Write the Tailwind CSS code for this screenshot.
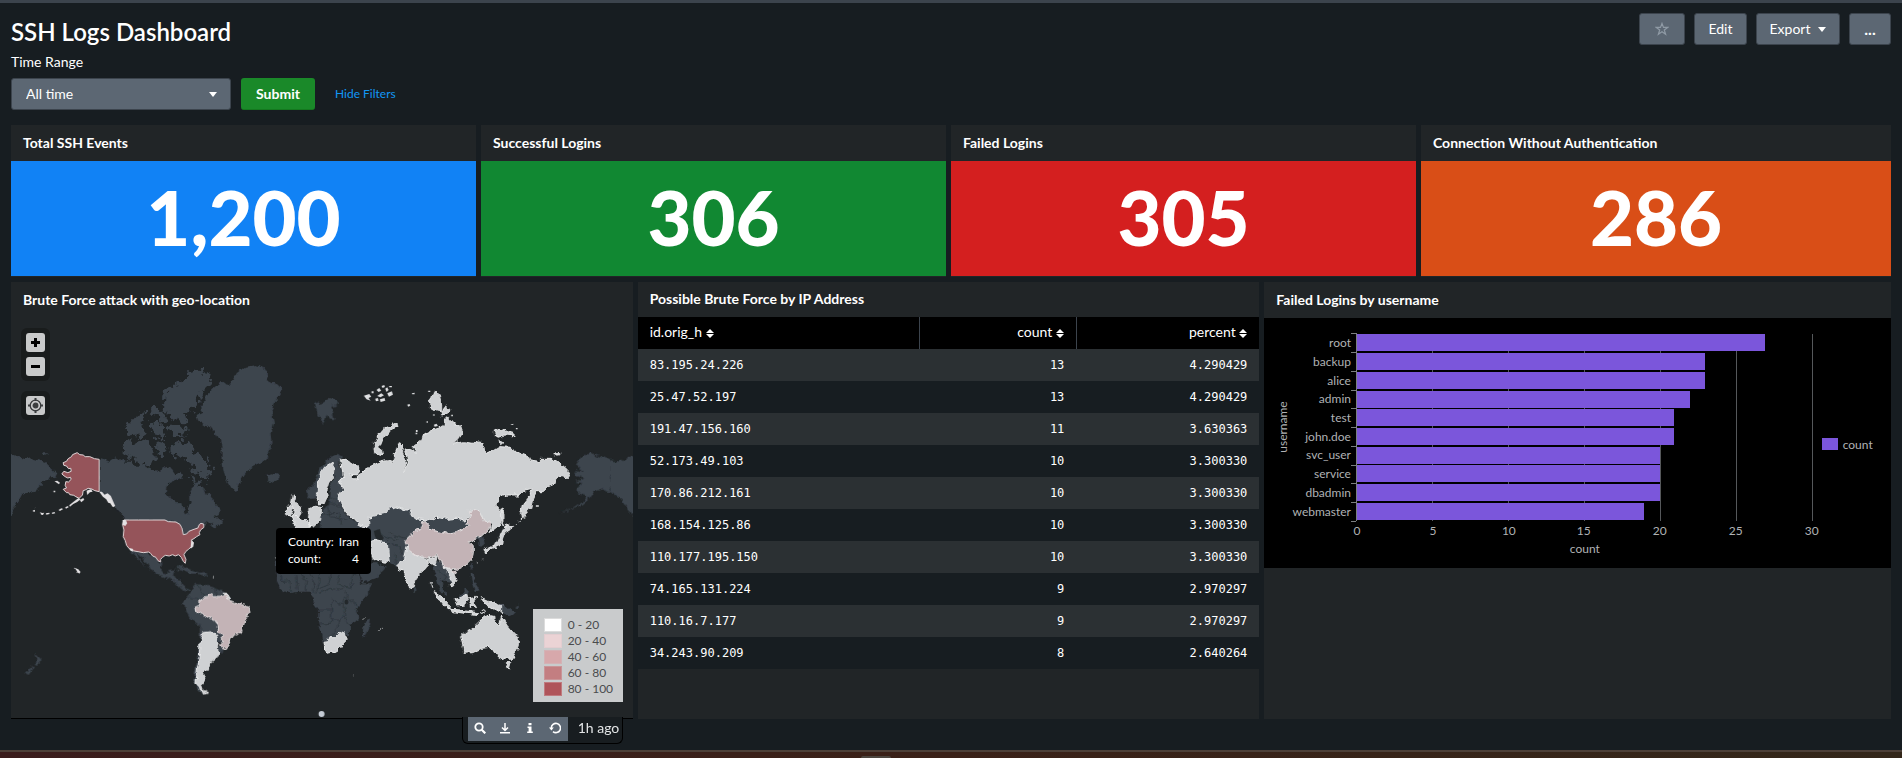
<!DOCTYPE html>
<html lang="en">
<head>
<meta charset="utf-8">
<title>SSH Logs Dashboard</title>
<meta name="viewport" content="width=device-width, initial-scale=1">
<script src="https://cdn.jsdelivr.net/npm/@tailwindcss/browser@4"></script>
</head>
<body class="bg-[#171d21] text-white text-sm font-['Lato',sans-serif]">
<div class="flex min-h-screen flex-col">
  <div class="h-[3px] bg-[#3c444d]"></div>

  <header class="flex items-start justify-between px-[11px] pt-[10px]">
    <div>
      <h1 class="pt-[7px] text-2xl leading-6 font-semibold">SSH Logs Dashboard</h1>
      <label for="range" class="mt-2 block leading-5">Time Range</label>
      <div class="mt-[6px] flex items-center">
        <div class="relative">
          <select id="range" class="h-8 w-[220px] appearance-none rounded-[3px] border border-[#3c444d] bg-[#5c6773] pl-[14px] text-sm text-white">
            <option>All time</option>
          </select>
          <svg class="pointer-events-none absolute top-[14px] right-[14px] h-[5px] w-2" viewBox="0 0 8 5" fill="#fff"><path d="M0 0h8L4 5z"/></svg>
        </div>
        <button class="ml-[10px] h-8 w-[74px] rounded-[3px] border-b border-[#14791f] bg-[#1a8929] font-bold">Submit</button>
        <a href="#" class="ml-5 pb-px text-xs text-[#1297f5]">Hide Filters</a>
      </div>
    </div>
    <div class="flex gap-[9px]">
      <button aria-label="Favorite" class="flex h-8 w-[46px] items-center justify-center rounded-[3px] border border-[#3c444d] bg-[#5c6773]">
        <svg class="h-[14px] w-[14px]" viewBox="0 0 14 14" fill="none" stroke="#8f9aa5" stroke-width="1.2"><path d="M7 1.4l1.5 4h4.2L9.3 8l1.3 4.2L7 9.7l-3.6 2.5L4.700 8 1.300 5.400h4.200z"/></svg>
      </button>
      <button class="h-8 w-[53px] rounded-[3px] border border-[#3c444d] bg-[#5c6773]">Edit</button>
      <button class="flex h-8 w-[84px] items-center justify-center gap-2 rounded-[3px] border border-[#3c444d] bg-[#5c6773]">Export
        <svg class="h-[5px] w-2" viewBox="0 0 8 5" fill="#fff"><path d="M0 0h8L4 5z"/></svg>
      </button>
      <button aria-label="More" class="h-8 w-[42px] rounded-[3px] border border-[#3c444d] bg-[#5c6773] text-base font-bold">...</button>
    </div>
  </header>

  <main class="px-[11px]">
    <div class="mt-[15px] grid grid-cols-4">
      <section class="mr-[5px] bg-[#212527] pb-px">
        <h2 class="h-9 px-3 pt-2 leading-5 font-bold">Total SSH Events</h2>
        <p class="flex h-[115px] items-center justify-center bg-[#1182f5] pb-1 text-[76px] leading-none font-black">1,200</p>
      </section>
      <section class="mr-[5px] bg-[#212527] pb-px">
        <h2 class="h-9 px-3 pt-2 leading-5 font-bold">Successful Logins</h2>
        <p class="flex h-[115px] items-center justify-center bg-[#118832] pb-1 text-[76px] leading-none font-black">306</p>
      </section>
      <section class="mr-[5px] bg-[#212527] pb-px">
        <h2 class="h-9 px-3 pt-2 leading-5 font-bold">Failed Logins</h2>
        <p class="flex h-[115px] items-center justify-center bg-[#d41f1f] pb-1 text-[76px] leading-none font-black">305</p>
      </section>
      <section class="bg-[#212527] pb-px">
        <h2 class="h-9 px-3 pt-2 leading-5 font-bold">Connection Without Authentication</h2>
        <p class="flex h-[115px] items-center justify-center bg-[#d94e17] pb-1 text-[76px] leading-none font-black">286</p>
      </section>
    </div>

    <div class="mt-[5px] grid grid-cols-3">
      <section class="relative mr-[5px] flex flex-col border-b border-black bg-[#212527]">
        <h2 class="h-9 px-3 pt-2 leading-5 font-bold">Brute Force attack with geo-location</h2>
        <svg class="h-[400px] w-full" viewBox="11 318 622 400" preserveAspectRatio="xMidYMid slice" role="img" aria-label="World map of attack counts">
          <defs>
            <filter id="coast" x="0" y="0" width="100%" height="100%"><feTurbulence type="fractalNoise" baseFrequency=".16" numOctaves="3" seed="4"/><feDisplacementMap in="SourceGraphic" scale="6" xChannelSelector="R" yChannelSelector="G"/></filter>
            <filter id="arctic" x="-5%" y="-5%" width="110%" height="110%"><feTurbulence type="fractalNoise" baseFrequency=".16" numOctaves="3" seed="9"/><feDisplacementMap in="SourceGraphic" scale="15" xChannelSelector="R" yChannelSelector="G"/></filter>
          </defs>
          <!-- countries without data -->
          <g fill="#3c444d" filter="url(#arctic)">
            <g transform="translate(0 280) scale(.33333)">
              <path d="M515 495L535 485 555 485 575 500 590 515 610 530 625 555 637 575 630 590 622 582 625 600 610 600 595 580 580 575 585 560 565 545 550 535 530 530 515 515ZM570 592L600 600 615 610 600 617 580 605ZM375 475L395 485 420 480 450 490 460 510 462 540 455 555 435 560 415 548 395 535 385 520 372 512 365 505ZM580 278L600 272 625 278 638 295 630 310 610 330 600 350 590 375 575 395 560 405 565 425 545 430 520 420 500 400 490 375 490 350 505 330 525 315 545 300 560 285ZM375 445L390 425 410 405 430 398 435 415 425 430 435 450 445 462 430 472 405 468ZM450 430L475 425 500 445 495 470 470 475 455 455ZM505 440L560 440 560 470 520 472ZM450 385L465 380 490 395 500 420 480 425ZM470 490L490 485 500 510 495 535 475 525Z"/>
            </g>
          </g>
          <g fill="#3c444d" filter="url(#coast)">
            <g transform="translate(0 280) scale(.33333)">
              <path d="M25 520L45 525 70 540 100 535 135 545 155 565 172 580 165 595 150 590 145 600 125 605 120 625 90 638 70 640 62 655 50 675 40 700 25 715ZM128 520l10-4 6 4-8 4Z"/>
              <path d="M299 538L330 545 350 532 375 545 395 545 410 560 440 560 460 570 480 572 500 560 515 565 525 580 545 575 550 590 530 600 515 605 500 620 498 640 510 655 530 665 545 672 550 690 555 703 565 700 562 680 572 665 570 640 575 625 590 612 610 625 618 645 630 640 640 660 655 680 662 690 660 705 645 712 672 722 670 732 650 735 640 745 630 738 640 725 622 728 610 740 590 748 565 760 550 765 545 745 520 725 375 718 360 700 345 680 330 648 299 635Z"/>
              <path d="M700 300L710 280 735 260 765 255 790 262 805 285 800 300 830 315 850 325 840 345 825 365 815 390 822 430 815 460 818 490 805 515 805 535 785 550 760 560 740 575 725 595 718 620 710 637 695 625 680 600 670 570 668 540 668 510 660 480 645 455 620 440 595 425 590 405 610 395 600 380 615 360 625 340 645 320 670 305 685 318ZM798 585L815 580 840 585 838 598 820 607 802 600Z"/>
            </g>
            <g transform="translate(300 280) scale(.33333)">
              <path d="M45 370L75 362 90 353 117 365 110 378 95 380 100 400 105 418 90 415 82 405 70 435 62 415 52 400ZM20 640L40 610 60 565 90 530 115 522 130 530 118 548 128 590 130 620 118 640 120 665 140 700 160 725 210 745 210 700 260 692 290 675 345 680 345 760 60 760 62 700 82 680 92 640 90 615 102 590 104 560 82 560 66 590 60 650 22 655Z"/>
              <path d="M828 555L845 530 868 520 895 528 935 540 960 548 990 530 1010 525 1010 725 985 690 970 665 940 640 905 628 885 635 870 655 840 680 800 695 780 700 820 685 850 665 862 650 835 640 830 625 848 610 830 605 850 595 825 585 830 570 850 575Z"/>
            </g>
            <g transform="translate(0 510) scale(.33333)">
              <path d="M392 122L447 128 455 138 470 145 480 155 488 160 482 178 490 188 505 190 510 180 525 178 520 195 530 210 545 212 548 228 558 235 572 238 560 242 545 238 525 215 500 205 470 192 452 180 440 160 425 140 412 128 418 145 435 170 425 160 405 135ZM525 176L545 168 575 180 605 190 570 191 545 178ZM590 190l22 -4 12 6-14 6Z"/>
              <path d="M575 235L590 222 620 225 650 235 672 245 690 262 690 290 655 345 655 370 665 378 672 395 658 400 650 380 630 365 610 370 600 400 600 440 594 480 594 515 603 535 608 553 590 535 582 510 588 470 595 420 600 380 600 350 575 330 560 305 552 280 560 260 570 250ZM655 410L672 416 668 430 655 430Z"/>
              <path d="M103 430L122 448 117 465 108 462 110 450ZM105 465L97 480 87 495 77 490 90 475Z"/>
            </g>
            <g transform="translate(300 510) scale(.33333)">
              <path d="M-72 150L-72 210 -60 235 -35 250 0 245 30 245 42 262 40 280 55 300 55 340 65 370 72 397 110 400 140 375 150 375 150 345 175 330 172 290 200 260 220 220 185 220 175 192 170 150ZM178 180L213 160 235 160 257 170 250 185 225 205 190 218 182 205ZM190 350L200 330 213 325 210 350 198 380 188 378Z"/>
              <path d="M190 0L335 0 345 28 500 22 508 48 470 75 400 80 330 120 292 168 268 162 213 110 205 60ZM530 80L547 78 552 105 540 110 538 95ZM340 230l7 4-2 12-6-2ZM512 190L522 190 525 215 540 240 525 247 515 215ZM512 168l6-6 2 12-5 2Z"/>
              <path d="M395 160L425 150 460 190 456 218 440 217 425 210 430 235 440 255 435 258 420 240 410 205ZM475 262L500 235 510 245 500 258ZM603 282L630 293 645 305 625 316 603 308ZM645 292l16-6-4 8Z"/>
            </g>
          </g>
          <!-- inland borders -->
          <g fill="none" stroke="#293036" stroke-width="1.8" filter="url(#coast)">
            <g transform="translate(300 510) scale(.33333)">
              <path d="M-55 192V215L-30 212-28 245M-10 195L-5 240M5 192L20 215 15 245M30 192L45 220 40 245M62 192L60 215 48 250M95 192L85 225 60 235M120 192L115 225 150 235 160 222M60 250L90 235 115 240 130 235M55 300L95 300 95 340 55 342M95 300L100 270 130 285 135 260M130 285L135 315 120 330 95 330M135 260L165 285M135 245L145 262 172 285M165 192L150 225M120 330L115 350 90 380M130 320L150 345M60 12L120 10 125 45M85 -30L90 20 140 30M230 60L260 85 300 90M265 70L320 85M265 100L300 105 310 140M290 165L285 130M415 180L440 200 430 215"/>
            </g>
            <g transform="translate(0 510) scale(.33333)"><path d="M595 222L600 245 620 262M560 260L580 268 600 265M600 345L610 370M648 235L650 260"/></g>
            <g transform="translate(300 280) scale(.33333)"><path d="M935 540V640M90 650L120 660M88 670L125 680"/></g>
          </g>
          <ellipse cx="346.500" cy="602" rx="2" ry="2.500" fill="#23282b"/>
          <path d="M374 531l6-2 1 5 3 4-3 4-4-2-2-4z" fill="#23282b"/>
          <!-- 0 - 20 -->
          <g fill="#cfd1d3" stroke="#e9eaeb" stroke-width="3" filter="url(#coast)">
            <g transform="translate(300 280) scale(.33333)">
              <path d="M122 540L140 538 165 555 178 572 170 585 150 582 165 598 180 580 195 568 210 560 235 548 260 542 278 548 285 520 298 488 310 495 308 520 318 555 308 575 322 560 322 535 315 505 335 510 350 520 340 500 365 480 370 465 400 450 430 440 435 425 445 415 458 430 480 435 487 455 478 475 460 492 490 485 520 490 530 485 550 488 555 520 575 515 600 500 630 502 660 520 685 530 690 540 725 545 725 535 750 535 775 545 795 562 812 580 798 600 790 590 768 592 765 612 745 620 730 635 708 635 700 650 692 680 680 695 665 718 662 700 668 675 688 650 697 625 675 630 660 645 625 645 605 650 585 675 595 690 605 690 605 715 600 735 590 745 573 758 577 735 550 720 540 692 520 690 508 710 495 720 470 715 440 718 410 712 385 720 345 716 330 690 310 690 290 680 270 685 260 700 205 712 207 740 190 740 165 725 155 712 140 695 130 680 118 660 118 640 130 625 120 600 130 590 125 560Z"/>
              <path d="M605 685L612 700 612 728 606 740ZM75 560L95 548 103 560 100 590 85 610 78 630 82 650 72 672 58 675 50 650 55 610 62 580Z"/>
              <path d="M385 365L398 345 405 330 418 345 425 375 425 392 410 390 395 380ZM422 408L432 385 440 378 452 392 440 405ZM245 527L225 520 220 495 232 470 255 445 290 428 294 440 270 450 250 475 240 500ZM580 455L600 445 620 455 640 460 645 468 615 465 598 472 585 468ZM597 480L612 488 605 494ZM762 520L778 516 780 524 765 526Z"/>
              <path d="M28 690L45 678 65 683 62 718 40 738 25 735ZM-20 642l8 2-4 18 14 16 6 20-8 14-18-4 8-16-12-18ZM-44 690l14-16 10 14-8 18-14 2ZM-22 706L5 716 28 730 33 760-12 760Z"/>
            </g>
            <g transform="translate(0 510) scale(.33333)">
              <path d="M608 368L630 365 650 378 656 395 652 412 658 435 640 450 630 458 625 475 610 490 618 505 605 525 610 540 625 550 607 552 603 535 588 520 592 480 598 440 600 400ZM670 250L680 250 690 265 680 276ZM298 635"/>
              <path d="M222 176l8 3M232 182l6 4M636 200h3M823 143h4M102 2h2"/>
            </g>
            <g transform="translate(300 510) scale(.33333)">
              <path d="M72 397L85 395 90 380 110 380 130 365 138 375 138 395 115 422 80 430ZM213 98L235 93 262 100 265 135 268 158 250 155 232 150 205 130Z"/>
              <path d="M318 112L330 108 340 130 380 150 412 138 405 165 395 165 385 155 378 175 360 190 345 210 340 230 330 235 318 205 312 182 298 180 292 165 310 150ZM430 172L455 176 462 190 468 215 455 230 445 228 458 215 450 195 440 180Z"/>
              <path d="M403 245L420 255 440 275 455 295 450 300 430 285 412 262ZM452 298L480 300 510 305 535 308 535 314 500 310 460 305ZM465 265L485 260 500 252 505 265 495 285 475 288ZM508 266L530 262 520 275 530 290 518 285 512 296ZM550 268L565 275 580 275 605 285 605 308 590 300 570 290 555 280ZM540 258l6 12M545 300l10 4M540 312l14-6M395 215l4 22"/>
              <path d="M482 380L500 365 520 355 535 340 548 328 560 318 582 322 582 338 598 348 605 318 615 335 625 350 640 368 655 385 655 410 645 430 635 448 610 447 595 440 590 430 580 430 570 412 545 415 515 428 492 430 488 400ZM617 458L633 458 628 477 620 475ZM612 52L618 42 640 50 615 66 608 85 605 105 575 115 558 132 552 120 575 108 595 95 603 70ZM188 -2"/>
              <path d="M646 44l4-3M658 34l4-4M668 26l4-4M676 14l4-4M190 324h4M236 360h4M244 358h4M159 497v2M530 160l3-2M544 152l3-2"/>
            </g>
          </g>
          <g fill="#dfe0e2" transform="translate(300 280) scale(.33333)"><path d="M192 347l16-5 6 8-8 4 6 8-12-4zM230 330l8-6 6 8-8 4zM232 348l12-8 8 6-10 6zM245 318l8-3 2 6-7 3zM256 326l6-4 4 8-6 6zM268 318h8v4h-8zM262 340l14-6 3 10-12 6zM240 358l14-4 2 8-14 4zM226 356l8-2 2 8-8 2zM215 334h6v6h-6zM336 340l8-2v5h-7zM322 374l7-2 2 5-6 3zM348 450h5v6h-5zM347 458h5v5h-5zM378 426l6-3v6zM385 332h6v4h-6zM632 434l8-3v4h-7zM648 444h5v4h-5zM402 434l8-3 4 7-10 2zM454 404h5v5h-5zM708 676h9v4h-9zM400 403h4v4h-4z"/></g>
          <!-- 20 - 40 -->
          <g fill="#c3b3b6" stroke="#e6e2e3" stroke-width="3" filter="url(#coast)">
            <path transform="translate(300 510) scale(.33333)" d="M320 90L345 65 360 55 368 35 378 32 390 58 440 72 470 68 490 55 508 48 500 40 512 15 508 2 520 -2 540 5 550 32 575 38 570 55 545 78 530 85 515 92 505 95 520 110 520 130 515 150 500 165 475 178 455 175 430 172 425 150 410 135 380 145 345 135 325 118 315 95ZM458 182l8-2 4 6-8 4Z"/>
            <path transform="translate(0 510) scale(.33333)" d="M600 285L600 265 625 262 635 250 645 262 668 262 675 252 690 272 715 280 748 292 750 308 735 330 728 360 710 372 695 380 688 400 675 420 658 408 672 395 665 378 655 370 655 345 640 325 615 318 588 308 585 292Z"/>
          </g>
          <!-- 80 - 100 -->
          <g fill="#95545a" stroke="#e0d6d8" stroke-width="3" stroke-linejoin="round">
            <path transform="translate(0 280) scale(.33333)" d="M232 518L240 524 250 525 256 530 270 530 284 536 298 538 298 635 285 632 276 627 265 625 256 630 250 632 248 645 238 655 228 650 222 646 210 644 206 638 200 638 190 628 200 624 196 616 198 605 206 606 214 598 212 592 204 594 196 590 186 582 192 574 204 578 214 574 213 565 206 566 200 558 192 556 190 548 200 544 205 536 215 530 218 524Z"/>
            <path transform="translate(0 510) scale(.33333)" d="M372 30H495L505 35 528 36 540 43 546 54 550 74 560 72 567 64 582 58 594 54 598 44 603 40 611 42 612 52 602 60 598 68 600 74 590 80 582 86 574 90 580 98 576 108 566 118 558 124 552 134 558 148 556 160 550 154 544 142 536 134 526 138 518 134 508 138 496 136 488 142 482 148 482 156 474 152 468 142 458 138 452 130 446 126 430 128 398 122 388 116 380 106 376 92 370 80 372 60 368 44Z"/>
          </g>
          <g transform="translate(0 280) scale(.33333)" fill="#e4e2e4"><path d="M298 635l8 0 8 9 9-4 10 8 6 14 7 16-7 4-8-12-6-2-6-10-10-8zM236 654l6 4-10 8-12 6-10 8-2-4 12-10zM260 632l14-5 4 8-8 2-8 8zM196 682l8-4 2 4-8 4zM176 690l8-5 6 2-10 6zM156 698l8-2 2 4-9 2zM138 700l10-2 1 4-10 2zM120 697l7 2 6-1-4 7h-4zM100 690h5v5h-5zM164 604l8-2 8 6-3 5zM161 632h5v5h-5zM240 660l10-6 3 5-9 8z"/></g>
          <g transform="translate(0 510) scale(.33333)" fill="#e4e2e4"><path d="M368 30l10 0 4 10-6 8-8-4zM574 90l8 8-2 12-8 6zM388 114l12 3-2 8-8-4zM225 174l10 4 7 8-4 5-6-6z"/></g>
          <circle cx="321.700" cy="714" r="3" fill="#c5ccd5"/>
        </svg>

        <div class="absolute top-[46px] left-[10px] flex flex-col gap-[10px]">
          <div class="flex flex-col gap-[5px] rounded-md bg-[#191c1c] p-[5px]">
            <button aria-label="Zoom in" class="flex h-[19px] w-[19px] items-center justify-center rounded-[3px] bg-[#c8c9c9]"><svg class="h-[9px] w-[9px]" viewBox="0 0 9 9"><path d="M3 0h3v3h3v3H6v3H3V6H0V3h3z"/></svg></button>
            <button aria-label="Zoom out" class="flex h-[19px] w-[19px] items-center justify-center rounded-[3px] bg-[#c8c9c9]"><svg class="h-[9px] w-[9px]" viewBox="0 0 9 9"><path d="M0 3h9v3H0z"/></svg></button>
          </div>
          <div class="rounded-md bg-[#191c1c] p-[5px]">
            <button aria-label="Reset view" class="flex h-[19px] w-[19px] items-center justify-center rounded-[3px] bg-[#c8c9c9]"><svg class="h-[15px] w-[15px]" viewBox="0 0 15 15" fill="none" stroke="#3b3d3e" stroke-width="1.300"><circle cx="7.500" cy="7.500" r="5.300"/><circle cx="7.500" cy="7.500" r="2.300" fill="#3b3d3e"/><path d="M7.500 0v3M7.500 12v3M0 7.500h3M12 7.500h3" stroke-width="2"/></svg></button>
          </div>
        </div>

        <dl class="absolute top-[246px] left-[265px] grid w-[95px] grid-cols-[auto_auto] rounded bg-black px-3 pt-[5px] pb-[7px] text-xs leading-[17px]">
          <dt>Country:</dt><dd class="text-right">Iran</dd>
          <dt>count:</dt><dd class="text-right">4</dd>
        </dl>

        <ul class="absolute right-[10px] bottom-4 w-[90px] bg-[#c9cbcc] pt-2 pb-[5px] pl-[11px] text-xs leading-4 text-[#4a4c4e]">
          <li class="flex items-center gap-[6px]"><span class="h-[14px] w-[18px] border border-[#dcdcdc] bg-white"></span>0 - 20</li>
          <li class="flex items-center gap-[6px]"><span class="h-[14px] w-[18px] border border-[#e3cdd0] bg-[#ebd3d5]"></span>20 - 40</li>
          <li class="flex items-center gap-[6px]"><span class="h-[14px] w-[18px] border border-[#d3b2b5] bg-[#d7a8ab]"></span>40 - 60</li>
          <li class="flex items-center gap-[6px]"><span class="h-[14px] w-[18px] border border-[#c89497] bg-[#c37e81]"></span>60 - 80</li>
          <li class="flex items-center gap-[6px]"><span class="h-[14px] w-[18px] border border-[#bf7a7e] bg-[#af5459]"></span>80 - 100</li>
        </ul>

        <div class="absolute top-[435px] right-[10px] flex h-[27px] w-[161px] items-start rounded-b-md border border-t-0 border-black bg-[#181d20] pl-[5px]">
          <div class="flex h-6 w-[100px] bg-[#5c6773]">
            <button aria-label="Open in search" class="flex flex-1 items-center justify-center pb-0.5"><svg class="h-3 w-3" viewBox="0 0 12 12" fill="none" stroke="#fff" stroke-width="1.800"><circle cx="5" cy="5" r="3.700"/><path d="M7.700 7.700l3.600 3.600" stroke-width="2.200"/></svg></button>
            <button aria-label="Export" class="flex flex-1 items-center justify-center pb-0.5"><svg class="h-3 w-3" viewBox="0 0 12 12" fill="none" stroke="#fff" stroke-width="1.500"><path d="M6 1v7.500M3 5.500l3 3 3-3M1 10.800h10"/></svg></button>
            <button aria-label="Inspect" class="flex flex-1 items-center justify-center pb-0.5"><svg class="h-3 w-3" viewBox="0 0 12 12" fill="#fff"><path d="M4.500 1h3v2.200h-3zM3.500 4.500h4V9.500h1.300V11H3.200V9.500h1.400V6H3.500z"/></svg></button>
            <button aria-label="Refresh" class="flex flex-1 items-center justify-center pb-0.5"><svg class="h-3 w-3" viewBox="0 0 12 12" fill="none" stroke="#fff" stroke-width="1.600"><path d="M2.300 6A4.600 4.600 0 1 1 4 9.600"/><path d="M0 5.500h4.800L2.400 8.500z" fill="#fff" stroke="none"/></svg></button>
          </div>
          <span class="ml-[10px] text-sm leading-[21px] text-[#e3e5e6]">1h ago</span>
        </div>
      </section>

      <section class="mr-[5px] bg-[#212527]">
        <h2 class="h-[35px] px-3 pt-[7px] leading-5 font-bold">Possible Brute Force by IP Address</h2>
        <table class="w-full table-fixed border-collapse">
          <colgroup><col><col class="w-[157px]"><col class="w-[183px]"></colgroup>
          <thead class="bg-black">
            <tr class="h-8">
              <th class="border-r border-[#3c444d] px-3 pb-0.5 text-left font-normal">id.orig_h <svg class="inline h-[9px] w-2 align-[-1px]" viewBox="0 0 8 9" fill="#fff"><path d="M4 0l4 4H0zM0 5h8L4 9z"/></svg></th>
              <th class="border-r border-[#3c444d] px-3 pb-0.5 text-right font-normal">count <svg class="inline h-[9px] w-2 align-[-1px]" viewBox="0 0 8 9" fill="#fff"><path d="M4 0l4 4H0zM0 5h8L4 9z"/></svg></th>
              <th class="px-3 pb-0.5 text-right font-normal">percent <svg class="inline h-[9px] w-2 align-[-1px]" viewBox="0 0 8 9" fill="#fff"><path d="M4 0l4 4H0zM0 5h8L4 9z"/></svg></th>
            </tr>
          </thead>
          <tbody class="font-['DejaVu_Sans_Mono',monospace] text-xs">
            <tr class="h-8 bg-[#2b3033]"><td class="px-3">83.195.24.226</td><td class="px-3 text-right">13</td><td class="px-3 text-right">4.290429</td></tr>
            <tr class="h-8 bg-[#171d21]"><td class="px-3">25.47.52.197</td><td class="px-3 text-right">13</td><td class="px-3 text-right">4.290429</td></tr>
            <tr class="h-8 bg-[#2b3033]"><td class="px-3">191.47.156.160</td><td class="px-3 text-right">11</td><td class="px-3 text-right">3.630363</td></tr>
            <tr class="h-8 bg-[#171d21]"><td class="px-3">52.173.49.103</td><td class="px-3 text-right">10</td><td class="px-3 text-right">3.300330</td></tr>
            <tr class="h-8 bg-[#2b3033]"><td class="px-3">170.86.212.161</td><td class="px-3 text-right">10</td><td class="px-3 text-right">3.300330</td></tr>
            <tr class="h-8 bg-[#171d21]"><td class="px-3">168.154.125.86</td><td class="px-3 text-right">10</td><td class="px-3 text-right">3.300330</td></tr>
            <tr class="h-8 bg-[#2b3033]"><td class="px-3">110.177.195.150</td><td class="px-3 text-right">10</td><td class="px-3 text-right">3.300330</td></tr>
            <tr class="h-8 bg-[#171d21]"><td class="px-3">74.165.131.224</td><td class="px-3 text-right">9</td><td class="px-3 text-right">2.970297</td></tr>
            <tr class="h-8 bg-[#2b3033]"><td class="px-3">110.16.7.177</td><td class="px-3 text-right">9</td><td class="px-3 text-right">2.970297</td></tr>
            <tr class="h-8 bg-[#171d21]"><td class="px-3">34.243.90.209</td><td class="px-3 text-right">8</td><td class="px-3 text-right">2.640264</td></tr>
          </tbody>
        </table>
      </section>

      <section class="bg-[#212527]">
        <h2 class="h-9 px-3 pt-2 leading-5 font-bold">Failed Logins by username</h2>
        <svg class="h-[250px] w-full bg-black text-xs" viewBox="0 0 627 250" fill="#b0b2b4" role="img" aria-label="Bar chart of failed logins by username">
          <path d="M168.500 16v187M244.500 16v187M320.500 16v187M396.500 16v187M472.500 16v187M548.500 16v187" stroke="#55585b" shape-rendering="crispEdges"/>
          <path d="M92.500 15v188M87 15.500h5M87 34.500h5M87 53.500h5M87 72.500h5M87 90.500h5M87 109.500h5M87 128.500h5M87 147.500h5M87 165.500h5M87 184.500h5M87 203.500h5" stroke="#7b7e80" shape-rendering="crispEdges"/>
          <g fill="#7b56db" shape-rendering="crispEdges">
            <rect x="93" y="16" width="408" height="17"/><rect x="93" y="35" width="348" height="17"/><rect x="93" y="54" width="348" height="17"/><rect x="93" y="73" width="333" height="17"/><rect x="93" y="91" width="317" height="17"/><rect x="93" y="110" width="317" height="17"/><rect x="93" y="129" width="303" height="17"/><rect x="93" y="147" width="303" height="17"/><rect x="93" y="166" width="303" height="17"/><rect x="93" y="185" width="287" height="17"/>
            <rect x="558" y="120" width="16" height="12"/>
          </g>
          <g text-anchor="end"><text x="87" y="29">root</text><text x="87" y="48">backup</text><text x="87" y="67">alice</text><text x="87" y="85">admin</text><text x="87" y="104">test</text><text x="87" y="123">john.doe</text><text x="87" y="141">svc_user</text><text x="87" y="160">service</text><text x="87" y="179">dbadmin</text><text x="87" y="198">webmaster</text></g>
          <g text-anchor="middle"><text x="93" y="217">0</text><text x="169" y="217">5</text><text x="245" y="217">10</text><text x="320" y="217">15</text><text x="396" y="217">20</text><text x="472" y="217">25</text><text x="548" y="217">30</text><text x="321" y="235">count</text><text transform="translate(23 109) rotate(-90)">username</text></g>
          <text x="579" y="131">count</text>
        </svg>
      </section>
    </div>
  </main>

  <footer class="mt-auto flex h-2 items-end justify-center border-t-2 border-[#4d4038] bg-linear-to-r from-[#3a1c1c] via-[#3a2118] to-[#33271a]"><span class="mr-[150px] h-[2px] w-[30px] rounded-t bg-[#4d4640]"></span></footer>
</div>
</body>
</html>
